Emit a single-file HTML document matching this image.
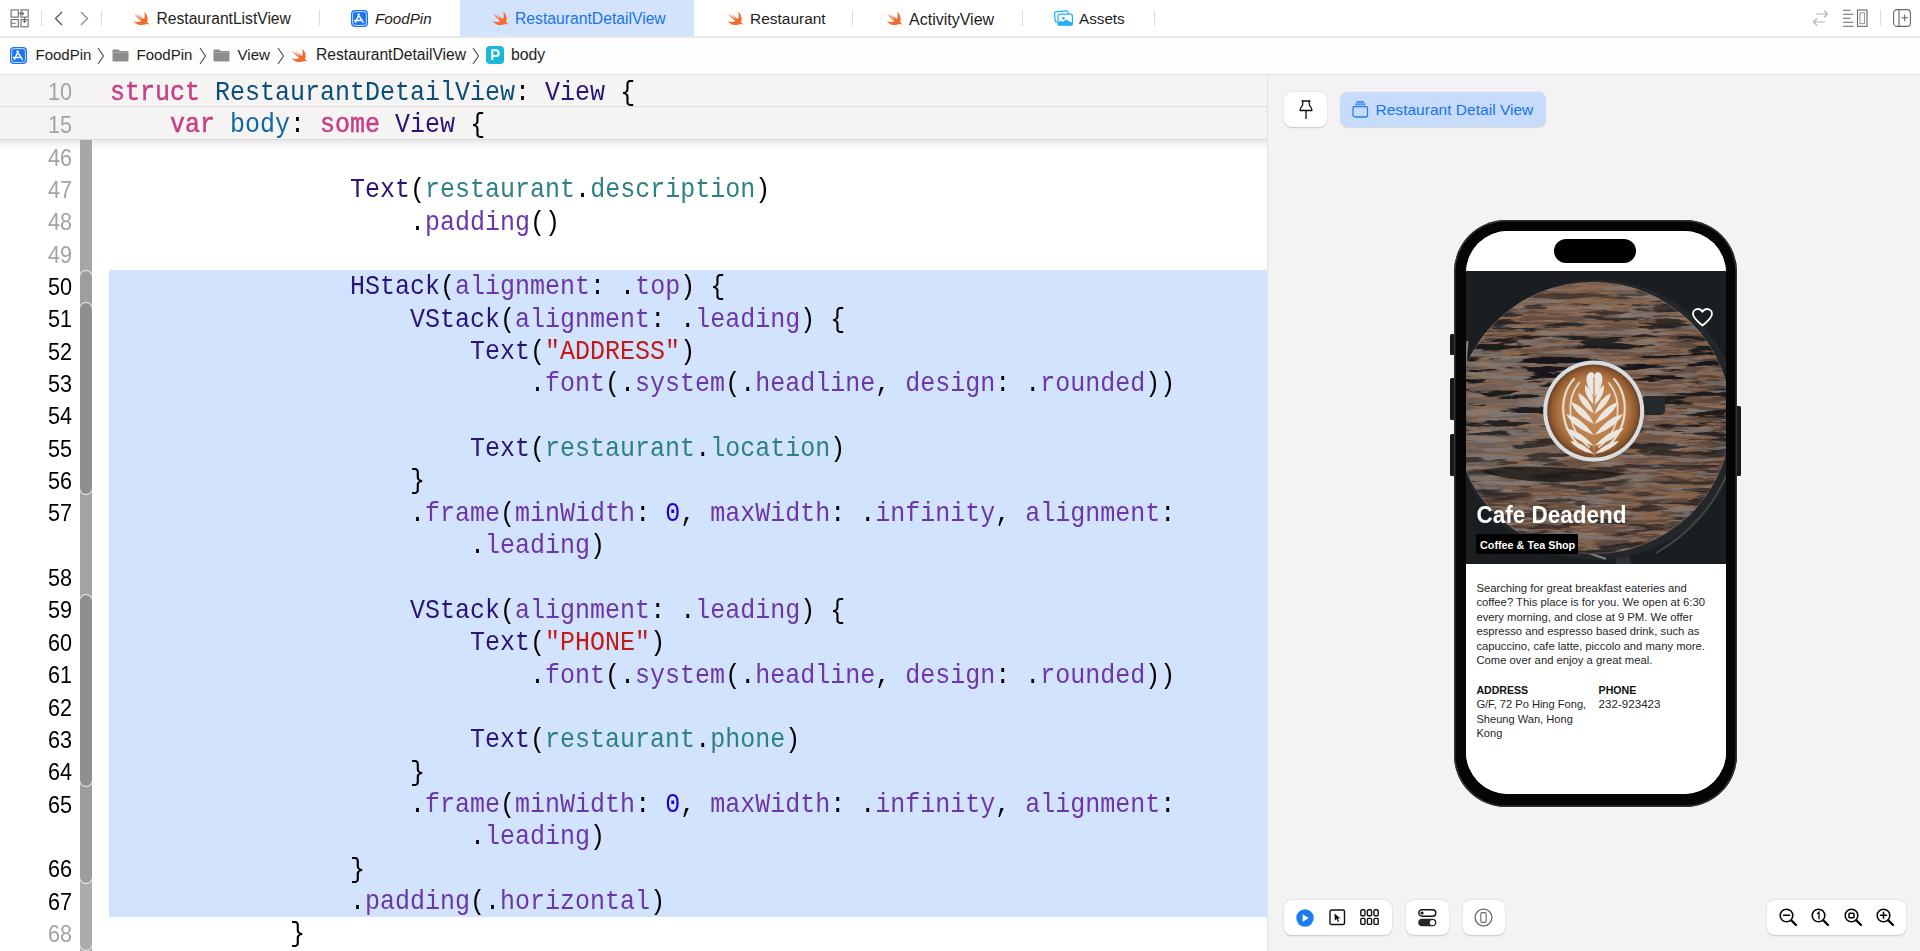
<!DOCTYPE html>
<html><head><meta charset="utf-8"><style>
*{margin:0;padding:0;box-sizing:border-box}
html,body{width:1920px;height:951px;overflow:hidden;background:#fff;font-family:"Liberation Sans",sans-serif}
.a{position:absolute}
svg{position:absolute;overflow:visible}
#tabs{left:0;top:0;width:1920px;height:38px;background:#fff;border-bottom:2px solid #e7e7e7}
.tt{position:absolute;font-size:15.6px;color:#1d1d1d;white-space:nowrap;line-height:20px}
.sep{position:absolute;top:10px;width:1px;height:16px;background:#dcdcdc}
#crumb{left:0;top:38px;width:1920px;height:37px;background:#fdfdfd;border-bottom:1px solid #e2e2e2}
.ct{position:absolute;font-size:15px;color:#1d1d1d;white-space:nowrap;line-height:20px}
#editor{left:0;top:75px;width:1267px;height:876px;background:#fff;overflow:hidden}
.ln{position:absolute;left:0;width:72px;text-align:right;font-size:23.5px;color:#a3a3a3;line-height:20px;white-space:nowrap;transform:scaleX(0.92);transform-origin:72px 0}
.ln.s{color:#000}
.cl{position:absolute;left:110px;font-family:"Liberation Mono",monospace;font-size:25px;line-height:30px;white-space:pre;color:#000;transform:scaleY(1.07);transform-origin:0 21.65px}
.k{color:#c63f84;-webkit-text-stroke:0.45px #c63f84}
.td{color:#0b4f79}
.ty{color:#2b1477}
.od{color:#0f68a0}
.pv{color:#2e8082}
.fn{color:#6c36a9}
.st{color:#c41a16}
.nu{color:#1c00cf}
#preview{left:1267px;top:75px;width:653px;height:876px;background:#f3f3f3;border-left:1px solid #e2e2e2;overflow:hidden}
</style></head><body>
<div id="editor" class="a"><div class="a" style="left:0;top:0;width:1267px;height:31px;background:#f5f4f3"></div><div class="a" style="left:0;top:31px;width:1267px;height:1px;background:#dcdcdc"></div><div class="a" style="left:0;top:32px;width:1267px;height:32px;background:#f5f4f3"></div><div class="a" style="left:0;top:64px;width:1267px;height:1px;background:#d9d9d9"></div><div class="a" style="left:0;top:65px;width:1267px;height:9px;background:linear-gradient(#e9e9e9,rgba(255,255,255,0))"></div><div class="a" style="left:109px;top:195px;width:1158px;height:647px;background:#d2e3fe"></div><div class="a" style="left:80px;top:65.0px;width:12px;height:820.0px;background:#a7a7a7;border-radius:0 0 0 0"></div><div class="a" style="left:80px;top:196.0px;width:12px;height:39.0px;background:#9d9f9f;border-radius:6px 6px 0 0;box-shadow:0 0 0 0.9px rgba(255,255,255,0.8)"></div><div class="a" style="left:80px;top:411.0px;width:12px;height:118.0px;background:#a2a3a3;border-radius:0 0 0 0"></div><div class="a" style="left:80px;top:800.0px;width:12px;height:74.5px;background:#ababab;border-radius:0 0 6px 6px;box-shadow:0 0 0 0.9px rgba(255,255,255,0.8)"></div><div class="a" style="left:80px;top:703.0px;width:12px;height:104.5px;background:#9d9d9d;border-radius:0 0 6px 6px;box-shadow:0 0 0 0.9px rgba(255,255,255,0.8)"></div><div class="a" style="left:80px;top:228.0px;width:12px;height:191.0px;background:#8f8f8f;border-radius:6px 6px 6px 6px;box-shadow:0 0 0 0.9px rgba(255,255,255,0.8)"></div><div class="a" style="left:80px;top:520.0px;width:12px;height:191.0px;background:#8f8f8f;border-radius:6px 6px 6px 6px;box-shadow:0 0 0 0.9px rgba(255,255,255,0.8)"></div><div class="ln" style="top:72.55px">46</div><div class="ln" style="top:104.90px">47</div><div class="cl" style="top:101.25px">                <span class="ty">Text</span>(<span class="pv">restaurant</span>.<span class="pv">description</span>)</div><div class="ln" style="top:137.25px">48</div><div class="cl" style="top:133.60px">                    .<span class="fn">padding</span>()</div><div class="ln" style="top:169.60px">49</div><div class="ln s" style="top:201.95px">50</div><div class="cl" style="top:198.30px">                <span class="ty">HStack</span>(<span class="fn">alignment</span>: .<span class="fn">top</span>) {</div><div class="ln s" style="top:234.30px">51</div><div class="cl" style="top:230.65px">                    <span class="ty">VStack</span>(<span class="fn">alignment</span>: .<span class="fn">leading</span>) {</div><div class="ln s" style="top:266.65px">52</div><div class="cl" style="top:263.00px">                        <span class="ty">Text</span>(<span class="st">"ADDRESS"</span>)</div><div class="ln s" style="top:299.00px">53</div><div class="cl" style="top:295.35px">                            .<span class="fn">font</span>(.<span class="fn">system</span>(.<span class="fn">headline</span>, <span class="fn">design</span>: .<span class="fn">rounded</span>))</div><div class="ln s" style="top:331.35px">54</div><div class="ln s" style="top:363.70px">55</div><div class="cl" style="top:360.05px">                        <span class="ty">Text</span>(<span class="pv">restaurant</span>.<span class="pv">location</span>)</div><div class="ln s" style="top:396.05px">56</div><div class="cl" style="top:392.40px">                    }</div><div class="ln s" style="top:428.40px">57</div><div class="cl" style="top:424.75px">                    .<span class="fn">frame</span>(<span class="fn">minWidth</span>: <span class="nu">0</span>, <span class="fn">maxWidth</span>: .<span class="fn">infinity</span>, <span class="fn">alignment</span>:</div><div class="cl" style="top:457.10px">                        .<span class="fn">leading</span>)</div><div class="ln s" style="top:493.10px">58</div><div class="ln s" style="top:525.45px">59</div><div class="cl" style="top:521.80px">                    <span class="ty">VStack</span>(<span class="fn">alignment</span>: .<span class="fn">leading</span>) {</div><div class="ln s" style="top:557.80px">60</div><div class="cl" style="top:554.15px">                        <span class="ty">Text</span>(<span class="st">"PHONE"</span>)</div><div class="ln s" style="top:590.15px">61</div><div class="cl" style="top:586.50px">                            .<span class="fn">font</span>(.<span class="fn">system</span>(.<span class="fn">headline</span>, <span class="fn">design</span>: .<span class="fn">rounded</span>))</div><div class="ln s" style="top:622.50px">62</div><div class="ln s" style="top:654.85px">63</div><div class="cl" style="top:651.20px">                        <span class="ty">Text</span>(<span class="pv">restaurant</span>.<span class="pv">phone</span>)</div><div class="ln s" style="top:687.20px">64</div><div class="cl" style="top:683.55px">                    }</div><div class="ln s" style="top:719.55px">65</div><div class="cl" style="top:715.90px">                    .<span class="fn">frame</span>(<span class="fn">minWidth</span>: <span class="nu">0</span>, <span class="fn">maxWidth</span>: .<span class="fn">infinity</span>, <span class="fn">alignment</span>:</div><div class="cl" style="top:748.25px">                        .<span class="fn">leading</span>)</div><div class="ln s" style="top:784.25px">66</div><div class="cl" style="top:780.60px">                }</div><div class="ln s" style="top:816.60px">67</div><div class="cl" style="top:812.95px">                .<span class="fn">padding</span>(.<span class="fn">horizontal</span>)</div><div class="ln" style="top:848.95px">68</div><div class="cl" style="top:845.30px">            }</div><div class="ln" style="top:7.30px">10</div><div class="cl" style="top:3.65px"><span class="k">struct</span> <span class="td">RestaurantDetailView</span>: <span class="ty">View</span> {</div><div class="ln" style="top:39.90px">15</div><div class="cl" style="top:36.25px">    <span class="k">var</span> <span class="od">body</span>: <span class="k">some</span> <span class="ty">View</span> {</div></div>
<div id="tabs" class="a"><div class="a" style="left:460px;top:0;width:234px;height:36px;background:#d3e3fb"></div><svg style="left:10px;top:9px" width="19" height="19" viewBox="0 0 19 19"><g fill="none" stroke="#6b6b6b" stroke-width="1.1"><rect x="1.1" y="0.9" width="7.2" height="7.2"/><rect x="11" y="0.9" width="7.2" height="7.2"/><rect x="1.1" y="10.6" width="7.2" height="7.2"/><rect x="11" y="10.6" width="7.2" height="7.2"/><path d="M8.3 4.5H13.5M12 3L13.5 4.5L12 6M14.6 8.1V13.3M13.1 11.8L14.6 13.3L16.1 11.8M1.1 14.2H5.5"/></g></svg><div class="sep" style="left:41px"></div><svg style="left:54px;top:11px" width="9" height="15" viewBox="0 0 9 15"><path d="M8 1L1.5 7.5L8 14" stroke="#555" stroke-width="1.3" fill="none"/></svg><svg style="left:80px;top:11px" width="9" height="15" viewBox="0 0 9 15"><path d="M1 1L7.5 7.5L1 14" stroke="#8a8a8a" stroke-width="1.3" fill="none"/></svg><div class="sep" style="left:101px"></div><svg style="left:133.0px;top:11.0px" width="17.0" height="15.0" viewBox="0 0 17 15"><path fill="#f46a2c" d="M11 0.7C14.5 3 15.5 8 14 11.2C15 11.8 16 12.6 16.3 13.8C15.2 13 13.8 12.9 12.8 13.3C10.5 14.3 7 14.5 4.5 13.2C3 12.5 1.5 11.5 0.7 10.3C3 11.2 6 11.3 8.5 10C6 8.2 3 5.5 1 2.3C3.5 4.5 6.5 7 9 8.5C7.5 6.8 5.8 4.8 4.5 3C6.5 4.7 9 6.8 11 8C12 5.5 12 3 11 0.7Z"/></svg><div class="tt" style="left:156.5px;top:9.2px;font-size:15.64px">RestaurantListView</div><div class="sep" style="left:318.5px"></div><svg style="left:351.0px;top:9.5px" width="17" height="17" viewBox="0 0 17 17"><rect x="0" y="0" width="17" height="17" rx="4" fill="#1b74f5"/><rect x="1.6" y="1.6" width="13.8" height="13.8" rx="2.6" fill="#1b74f5" stroke="#d6e5fd" stroke-width="0.9"/><path d="M8.2 4.3L4.5 12.3M7 4.3L12.3 12.3M3.4 10.5H9.6" stroke="#fff" stroke-width="1.5" stroke-linecap="round" fill="none"/></svg><div class="tt" style="left:375px;top:9.2px;font-size:15.23px;font-style:italic">FoodPin</div><svg style="left:491.5px;top:11.0px" width="17.0" height="15.0" viewBox="0 0 17 15"><path fill="#f46a2c" d="M11 0.7C14.5 3 15.5 8 14 11.2C15 11.8 16 12.6 16.3 13.8C15.2 13 13.8 12.9 12.8 13.3C10.5 14.3 7 14.5 4.5 13.2C3 12.5 1.5 11.5 0.7 10.3C3 11.2 6 11.3 8.5 10C6 8.2 3 5.5 1 2.3C3.5 4.5 6.5 7 9 8.5C7.5 6.8 5.8 4.8 4.5 3C6.5 4.7 9 6.8 11 8C12 5.5 12 3 11 0.7Z"/></svg><div class="tt" style="left:515px;top:9.2px;font-size:15.71px;color:#1a73e8">RestaurantDetailView</div><svg style="left:726.5px;top:11.0px" width="17.0" height="15.0" viewBox="0 0 17 15"><path fill="#f46a2c" d="M11 0.7C14.5 3 15.5 8 14 11.2C15 11.8 16 12.6 16.3 13.8C15.2 13 13.8 12.9 12.8 13.3C10.5 14.3 7 14.5 4.5 13.2C3 12.5 1.5 11.5 0.7 10.3C3 11.2 6 11.3 8.5 10C6 8.2 3 5.5 1 2.3C3.5 4.5 6.5 7 9 8.5C7.5 6.8 5.8 4.8 4.5 3C6.5 4.7 9 6.8 11 8C12 5.5 12 3 11 0.7Z"/></svg><div class="tt" style="left:750px;top:9.2px;font-size:15.48px">Restaurant</div><div class="sep" style="left:852px"></div><svg style="left:885.5px;top:11.0px" width="17.0" height="15.0" viewBox="0 0 17 15"><path fill="#f46a2c" d="M11 0.7C14.5 3 15.5 8 14 11.2C15 11.8 16 12.6 16.3 13.8C15.2 13 13.8 12.9 12.8 13.3C10.5 14.3 7 14.5 4.5 13.2C3 12.5 1.5 11.5 0.7 10.3C3 11.2 6 11.3 8.5 10C6 8.2 3 5.5 1 2.3C3.5 4.5 6.5 7 9 8.5C7.5 6.8 5.8 4.8 4.5 3C6.5 4.7 9 6.8 11 8C12 5.5 12 3 11 0.7Z"/></svg><div class="tt" style="left:909px;top:9.2px;font-size:16.03px">ActivityView</div><div class="sep" style="left:1022px"></div><svg style="left:1053px;top:10px" width="21" height="17" viewBox="0 0 21 17"><g fill="none" stroke="#1fb0f7" stroke-width="1.25" stroke-linejoin="round"><path d="M4.8 12.1H3.6Q2.4 12 2.2 10.8L1.5 3.4Q1.4 2.1 2.7 1.9L13.3 0.8Q14.6 0.7 14.8 2L14.9 3.9"/><rect x="5" y="4.1" width="14.4" height="11.1" rx="2"/></g><circle cx="10.4" cy="8.3" r="1.25" fill="#1fb0f7"/><path d="M5.3 15.2V12.6L7.8 10.6L9.8 12L13.2 9.2L16.2 11.6L19.4 12.6V15.2Z" fill="#1fb0f7"/></svg><div class="tt" style="left:1079px;top:9.2px;font-size:15.24px">Assets</div><div class="sep" style="left:1153.5px"></div><svg style="left:1812px;top:9px" width="17" height="18" viewBox="0 0 17 18"><g fill="none" stroke="#b3b3b3" stroke-width="1.2"><path d="M4 5H15.5M12 1.5L15.5 5L12 8.5M13 13H1.5M5 9.5L1.5 13L5 16.5"/></g></svg><svg style="left:1843px;top:9px" width="25" height="18" viewBox="0 0 25 18"><g fill="none" stroke="#656565" stroke-width="1.1"><path d="M0 1.2H7.5M0 5.2H10.5M0 9.2H7.5M0 13.2H10.5M0 17.2H10.5"/><rect x="14.5" y="1" width="9.5" height="16.3"/></g><rect x="17" y="3.8" width="4.5" height="10.8" fill="none" stroke="#9a9a9a" stroke-width="1.1"/></svg><div class="sep" style="left:1880px"></div><svg style="left:1893px;top:9px" width="18" height="18" viewBox="0 0 18 18"><g fill="none" stroke="#656565" stroke-width="1.1"><rect x="0.6" y="0.6" width="16.8" height="16.8" rx="3.5"/><path d="M6 0.6V17.4M11.7 5.5V12.2M8.3 8.8H15"/></g></svg></div>
<div id="crumb" class="a"><svg style="left:10.0px;top:9.0px" width="17" height="17" viewBox="0 0 17 17"><rect x="0" y="0" width="17" height="17" rx="4" fill="#1b74f5"/><rect x="1.6" y="1.6" width="13.8" height="13.8" rx="2.6" fill="#1b74f5" stroke="#d6e5fd" stroke-width="0.9"/><path d="M8.2 4.3L4.5 12.3M7 4.3L12.3 12.3M3.4 10.5H9.6" stroke="#fff" stroke-width="1.5" stroke-linecap="round" fill="none"/></svg><div class="ct" style="left:35.5px;top:7.2px;font-size:15.03px">FoodPin</div><svg style="left:97.0px;top:8.5px" width="8" height="18" viewBox="0 0 8 18"><path d="M1 1L6.5 9L1 17" stroke="#4a4a4a" stroke-width="1.1" fill="none"/></svg><svg style="left:111.5px;top:11.0px" width="17" height="13" viewBox="0 0 17 13"><path d="M1.5 0.5H6.5L8 2H15.5A1 1 0 0 1 16.5 3V11.5A1 1 0 0 1 15.5 12.5H1.5A1 1 0 0 1 0.5 11.5V1.5A1 1 0 0 1 1.5 0.5Z" fill="#8d8d8d"/><path d="M0.5 3.5H16.5" stroke="#a9a9a9" stroke-width="0.8"/></svg><div class="ct" style="left:136.5px;top:7.2px;font-size:15.03px">FoodPin</div><svg style="left:198.5px;top:8.5px" width="8" height="18" viewBox="0 0 8 18"><path d="M1 1L6.5 9L1 17" stroke="#4a4a4a" stroke-width="1.1" fill="none"/></svg><svg style="left:212.5px;top:11.0px" width="17" height="13" viewBox="0 0 17 13"><path d="M1.5 0.5H6.5L8 2H15.5A1 1 0 0 1 16.5 3V11.5A1 1 0 0 1 15.5 12.5H1.5A1 1 0 0 1 0.5 11.5V1.5A1 1 0 0 1 1.5 0.5Z" fill="#8d8d8d"/><path d="M0.5 3.5H16.5" stroke="#a9a9a9" stroke-width="0.8"/></svg><div class="ct" style="left:237.5px;top:7.2px;font-size:15.1px">View</div><svg style="left:277.0px;top:8.5px" width="8" height="18" viewBox="0 0 8 18"><path d="M1 1L6.5 9L1 17" stroke="#4a4a4a" stroke-width="1.1" fill="none"/></svg><svg style="left:291.0px;top:10.0px" width="17.0" height="15.0" viewBox="0 0 17 15"><path fill="#f46a2c" d="M11 0.7C14.5 3 15.5 8 14 11.2C15 11.8 16 12.6 16.3 13.8C15.2 13 13.8 12.9 12.8 13.3C10.5 14.3 7 14.5 4.5 13.2C3 12.5 1.5 11.5 0.7 10.3C3 11.2 6 11.3 8.5 10C6 8.2 3 5.5 1 2.3C3.5 4.5 6.5 7 9 8.5C7.5 6.8 5.8 4.8 4.5 3C6.5 4.7 9 6.8 11 8C12 5.5 12 3 11 0.7Z"/></svg><div class="ct" style="left:316px;top:7.2px;font-size:15.63px">RestaurantDetailView</div><svg style="left:471.5px;top:8.5px" width="8" height="18" viewBox="0 0 8 18"><path d="M1 1L6.5 9L1 17" stroke="#4a4a4a" stroke-width="1.1" fill="none"/></svg><svg style="left:486px;top:8.0px" width="18" height="18" viewBox="0 0 18 18"><rect width="18" height="18" rx="4" fill="#18b8d8"/><path d="M6.3 14V4.3H9.8A2.9 2.9 0 0 1 9.8 10.1H6.3" fill="none" stroke="#fff" stroke-width="2"/></svg><div class="ct" style="left:511px;top:7.2px;font-size:15.8px">body</div></div>
<div id="preview" class="a"><div class="a" style="left:16.0px;top:17.0px;width:43px;height:35px;background:#fff;border-radius:8px;box-shadow:0 0.5px 1.5px rgba(0,0,0,0.18)"></div><svg style="left:30.5px;top:24.5px" width="14" height="20" viewBox="0 0 14 20"><g fill="none" stroke="#111" stroke-width="1.3" stroke-linejoin="round"><path d="M2.5 1H11.5M4 1L3.5 5.5C1.5 7 1 8.5 1 10.5H13C13 8.5 12.5 7 10.5 5.5L10 1M7 10.5V19"/></g></svg><div class="a" style="left:72.0px;top:17.0px;width:206px;height:35px;background:#c7dcfb;border-radius:8px;box-shadow:0 0.5px 1.5px rgba(0,0,0,0.12)"></div><svg style="left:83.5px;top:26.0px" width="17" height="17" viewBox="0 0 17 17"><g fill="none" stroke="#2a7cf0" stroke-width="1.3"><rect x="1" y="5.5" width="14.5" height="10.5" rx="2"/><path d="M3 3.2H13.5M4.5 1H12"/></g></svg><div class="a" style="left:107.5px;top:24.5px;font-size:15.56px;line-height:20px;color:#1a72ea;white-space:nowrap">Restaurant Detail View</div><div class="a" style="left:181.5px;top:258.5px;width:5px;height:21.5px;background:#1a1a1a;border-radius:1.5px"></div><div class="a" style="left:181.5px;top:303.0px;width:5px;height:42.0px;background:#1a1a1a;border-radius:1.5px"></div><div class="a" style="left:181.5px;top:358.5px;width:5px;height:42.0px;background:#1a1a1a;border-radius:1.5px"></div><div class="a" style="left:468.0px;top:331.0px;width:5px;height:69.5px;background:#1a1a1a;border-radius:1.5px"></div><div class="a" style="left:186.0px;top:145.0px;width:283px;height:587px;background:#050505;border-radius:52px;box-shadow:inset 0 0 0 1.5px #353535"></div><div class="a" style="left:198.0px;top:155.5px;width:260px;height:563.5px;border-radius:42px;overflow:hidden;background:#fff"><div class="a" style="left:0;top:0;width:260px;height:563.5px;background:#fff"></div><div class="a" style="left:0;top:40.5px;width:260px;height:293.0px;overflow:hidden;background:#1b1e21"><svg style="left:0;top:0" width="260" height="293" viewBox="0 0 260 293">
<defs>
<filter id="wdark" x="0" y="0" width="100%" height="100%" color-interpolation-filters="sRGB">
<feTurbulence type="fractalNoise" baseFrequency="0.018 0.14" numOctaves="5" seed="5" result="n"/>
<feColorMatrix type="matrix" values="0 0 0 0 0.09  0 0 0 0 0.09  0 0 0 0 0.10  0 0 0 12 -6.5" in="n"/>
</filter>
<filter id="wgray" x="0" y="0" width="100%" height="100%" color-interpolation-filters="sRGB">
<feTurbulence type="fractalNoise" baseFrequency="0.02 0.2" numOctaves="4" seed="17" result="n"/>
<feColorMatrix type="matrix" values="0 0 0 0 0.54  0 0 0 0 0.52  0 0 0 0 0.52  0 0 0 10 -5.1" in="n"/>
</filter>
<filter id="worange" x="0" y="0" width="100%" height="100%" color-interpolation-filters="sRGB">
<feTurbulence type="fractalNoise" baseFrequency="0.03 0.28" numOctaves="4" seed="29" result="n"/>
<feColorMatrix type="matrix" values="0 0 0 0 0.56  0 0 0 0 0.41  0 0 0 0 0.31  0 0 0 8 -3.8" in="n"/>
</filter>
<linearGradient id="band" x1="0" y1="0" x2="0" y2="1">
<stop offset="0" stop-color="#fff" stop-opacity="0.35"/><stop offset="0.3" stop-color="#fff" stop-opacity="1"/><stop offset="0.5" stop-color="#fff" stop-opacity="0.9"/><stop offset="0.7" stop-color="#fff" stop-opacity="0.5"/><stop offset="1" stop-color="#fff" stop-opacity="0.7"/>
</linearGradient>
<mask id="bandm"><rect width="260" height="293" fill="url(#band)"/></mask>
<radialGradient id="tbase" cx="50%" cy="50%" r="50%">
<stop offset="0" stop-color="#72594a"/><stop offset="0.8" stop-color="#654f42"/><stop offset="1" stop-color="#4e4039"/>
</radialGradient>
<radialGradient id="latte" cx="50%" cy="50%" r="50%">
<stop offset="0" stop-color="#c68e5c"/><stop offset="0.7" stop-color="#b77c48"/><stop offset="0.9" stop-color="#925b30"/><stop offset="1" stop-color="#6a4226"/>
</radialGradient>
<filter id="soft" x="-2%" y="-2%" width="104%" height="104%"><feGaussianBlur stdDeviation="0.55"/></filter>
<clipPath id="tc"><ellipse cx="127" cy="147" rx="138" ry="136"/></clipPath>
<clipPath id="lc"><circle cx="127.7" cy="140.1" r="46.5"/></clipPath>
</defs>
<rect width="260" height="293" fill="#1b1e21"/>
<path d="M148 270L150 293H166L158 270Z" fill="#2e3236"/>
<ellipse cx="131" cy="149" rx="143" ry="140" fill="#23272a"/>
<path d="M1.5 70C-8 150 20 250 140 288" fill="none" stroke="#8a9095" stroke-width="2.2" opacity="0.85"/>
<path d="M190 282C225 262 250 232 262 200" fill="none" stroke="#4a4f53" stroke-width="2" opacity="0.8"/>
<g clip-path="url(#tc)"><g filter="url(#soft)">
<rect width="260" height="293" fill="url(#tbase)"/>
<ellipse cx="40" cy="150" rx="60" ry="70" fill="#7c7a78" opacity="0.45"/>
<ellipse cx="120" cy="22" rx="90" ry="22" fill="#9a7458" opacity="0.45"/>
<rect width="260" height="293" filter="url(#worange)" opacity="0.85"/>
<rect width="260" height="293" filter="url(#wgray)" opacity="0.55"/>
<g mask="url(#bandm)"><rect width="260" height="293" filter="url(#wdark)"/></g>
<path d="M14 200C40 192 110 196 160 203C120 214 50 214 14 200Z" fill="#161616" opacity="0.75"/>
</g><ellipse cx="127" cy="147" rx="138" ry="136" fill="none" stroke="#a08a78" stroke-width="2" opacity="0.35"/>
</g>
<rect x="176" y="125" width="23" height="19" rx="4.5" fill="#26292c"/>
<circle cx="127.7" cy="140.1" r="50.5" fill="#dadee1"/>
<circle cx="127.7" cy="140.1" r="46.5" fill="url(#latte)"/>
<g clip-path="url(#lc)"><g fill="none" stroke="#ece6e0" stroke-linecap="round" opacity="0.9"><path d="M108 108C92 125 92 160 120 180" stroke-width="2.2"/><path d="M148 108C164 125 164 160 136 180" stroke-width="2.2"/><path d="M113 112C100 128 100 158 123 176" stroke-width="1.8"/><path d="M143 112C156 128 156 158 133 176" stroke-width="1.8"/></g><g fill="#ece6e0"><path d="M128.5 126C120 116 118 104 124 101.5C127 100.5 128.5 103 128.5 105.5C128.5 103 130 100.5 133 101.5C139 104 137 116 128.5 126Z"/><path d="M128.0 134.0Q127.6 119.7 119.0 114.0Q117.6 124.3 128.0 134.0Z"/><path d="M128.5 134.0Q139.2 124.4 138.0 114.0Q129.2 119.6 128.5 134.0Z"/><path d="M128.0 143.0Q123.2 126.8 112.0 122.0Q113.6 134.0 128.0 143.0Z"/><path d="M128.5 143.0Q143.1 134.1 145.0 122.0Q133.7 126.7 128.5 143.0Z"/><path d="M128.0 153.0Q118.7 135.1 105.0 131.0Q109.7 144.5 128.0 153.0Z"/><path d="M128.5 153.0Q147.0 144.5 152.0 131.0Q138.2 135.1 128.5 153.0Z"/><path d="M128.0 164.0Q115.1 146.2 100.0 143.0Q107.3 156.6 128.0 164.0Z"/><path d="M128.5 164.0Q149.5 156.6 157.0 143.0Q141.7 146.2 128.5 164.0Z"/><path d="M128.0 175.0Q113.8 159.1 99.0 157.0Q107.4 169.3 128.0 175.0Z"/><path d="M128.5 175.0Q149.3 169.3 158.0 157.0Q143.1 159.1 128.5 175.0Z"/><path d="M128.0 183.0Q116.0 170.8 104.0 170.0Q111.2 179.6 128.0 183.0Z"/><path d="M128.5 183.0Q145.5 179.6 153.0 170.0Q140.9 170.8 128.5 183.0Z"/></g></g><path d="M128 106V186" stroke="#c08a58" stroke-width="1.2"/></svg><svg style="left:226.3px;top:37.0px" width="21" height="19" viewBox="0 0 21 19"><path d="M10.5 17.5C4 12.5 1 9.5 1 5.8C1 3 3.2 1 5.8 1C7.8 1 9.5 2.2 10.5 3.8C11.5 2.2 13.2 1 15.2 1C17.8 1 20 3 20 5.8C20 9.5 17 12.5 10.5 17.5Z" fill="none" stroke="#fff" stroke-width="1.8" stroke-linejoin="round"/></svg><div class="a" style="left:10.5px;top:231.7px;font-size:22.5px;font-weight:bold;color:#fff;line-height:26px;white-space:nowrap;transform:scaleY(1.1);transform-origin:0 20.3px">Cafe Deadend</div><div class="a" style="left:10.3px;top:263.0px;width:102px;height:20px;background:#000"></div><div class="a" style="left:14.0px;top:267.0px;font-size:10.8px;font-weight:bold;color:#fff;line-height:14px;white-space:nowrap">Coffee &amp; Tea Shop</div></div><div class="a" style="left:88.0px;top:8.5px;width:82px;height:24px;background:#000;border-radius:12px"></div><div class="a" style="left:10.4px;top:350.30px;font-size:11.27px;line-height:14px;color:#1f1f1f;white-space:nowrap">Searching for great breakfast eateries and</div><div class="a" style="left:10.4px;top:364.80px;font-size:11.27px;line-height:14px;color:#1f1f1f;white-space:nowrap">coffee? This place is for you. We open at 6:30</div><div class="a" style="left:10.4px;top:379.30px;font-size:11.27px;line-height:14px;color:#1f1f1f;white-space:nowrap">every morning, and close at 9 PM. We offer</div><div class="a" style="left:10.4px;top:393.80px;font-size:11.27px;line-height:14px;color:#1f1f1f;white-space:nowrap">espresso and espresso based drink, such as</div><div class="a" style="left:10.4px;top:408.30px;font-size:11.27px;line-height:14px;color:#1f1f1f;white-space:nowrap">capuccino, cafe latte, piccolo and many more.</div><div class="a" style="left:10.4px;top:422.80px;font-size:11.27px;line-height:14px;color:#1f1f1f;white-space:nowrap">Come over and enjoy a great meal.</div><div class="a" style="left:10.4px;top:452.20px;font-size:10.6px;font-weight:bold;line-height:14px;color:#111;white-space:nowrap">ADDRESS</div><div class="a" style="left:132.6px;top:452.20px;font-size:10.6px;font-weight:bold;line-height:14px;color:#111;white-space:nowrap">PHONE</div><div class="a" style="left:10.4px;top:466.50px;font-size:11.1px;line-height:14px;color:#1f1f1f;white-space:nowrap">G/F, 72 Po Hing Fong,</div><div class="a" style="left:10.4px;top:481.00px;font-size:11.1px;line-height:14px;color:#1f1f1f;white-space:nowrap">Sheung Wan, Hong</div><div class="a" style="left:10.4px;top:495.50px;font-size:11.1px;line-height:14px;color:#1f1f1f;white-space:nowrap">Kong</div><div class="a" style="left:132.6px;top:466.50px;font-size:11.6px;line-height:14px;color:#1f1f1f;white-space:nowrap">232-923423</div></div><div class="a" style="left:16.2px;top:824.6px;width:107.8px;height:35.2px;background:#fff;border-radius:8px;box-shadow:0 0.5px 2px rgba(0,0,0,0.2)"></div><div class="a" style="left:138.0px;top:824.6px;width:43.0px;height:35.2px;background:#fff;border-radius:8px;box-shadow:0 0.5px 2px rgba(0,0,0,0.2)"></div><div class="a" style="left:195.0px;top:824.6px;width:42.0px;height:35.2px;background:#fff;border-radius:8px;box-shadow:0 0.5px 2px rgba(0,0,0,0.2)"></div><div class="a" style="left:498.5px;top:824.6px;width:139.9px;height:35.2px;background:#fff;border-radius:8px;box-shadow:0 0.5px 2px rgba(0,0,0,0.2)"></div><svg style="left:28.2px;top:833.6px" width="18" height="18" viewBox="0 0 18 18"><circle cx="9" cy="9" r="8.7" fill="#1a7bf2"/><path d="M6.6 5.2L12.8 9L6.6 12.8Z" fill="#fff"/></svg><svg style="left:60.5px;top:834.0px" width="17" height="17" viewBox="0 0 17 17"><rect x="1" y="1" width="14.5" height="14.5" rx="1.5" fill="none" stroke="#111" stroke-width="1.4"/><path d="M5.5 4.5L11.3 9.2L8.8 9.4L10.2 12.4L9 13L7.6 10L5.8 11.8Z" fill="#111"/></svg><svg style="left:91.5px;top:834.0px" width="19" height="17" viewBox="0 0 19 17"><g fill="none" stroke="#111" stroke-width="1.4"><rect x="0.8" y="0.8" width="4.2" height="6" rx="1.2"/><rect x="0.8" y="9.4" width="4.2" height="6" rx="1.2"/><rect x="7.4" y="0.8" width="4.2" height="6" rx="1.2"/><rect x="7.4" y="9.4" width="4.2" height="6" rx="1.2"/><rect x="14.0" y="0.8" width="4.2" height="6" rx="1.2"/><rect x="14.0" y="9.4" width="4.2" height="6" rx="1.2"/></g></svg><svg style="left:150.0px;top:834.0px" width="19" height="18" viewBox="0 0 19 18"><rect x="0.8" y="0.8" width="17" height="6.4" rx="3.2" fill="none" stroke="#111" stroke-width="1.4"/><circle cx="4" cy="4" r="1.6" fill="#111"/><rect x="0.3" y="9.8" width="18" height="7.4" rx="3.7" fill="#262626"/><circle cx="14.4" cy="13.5" r="2.6" fill="#fff"/></svg><svg style="left:206.2px;top:833.1px" width="19" height="19" viewBox="0 0 19 19"><circle cx="9.5" cy="9.5" r="8.4" fill="none" stroke="#6a6a6a" stroke-width="1.3"/><rect x="6.8" y="4.6" width="5.4" height="9.8" rx="1.2" fill="none" stroke="#6a6a6a" stroke-width="1.1"/></svg><svg style="left:510.7px;top:833.3px" width="20" height="20" viewBox="0 0 20 20"><g fill="none" stroke="#000" stroke-width="1.6" stroke-linecap="round"><circle cx="7.5" cy="7.5" r="6.3"/><path d="M12.2 12.2L17 17" stroke-width="2.3"/><path d="M4.5 7.3H10.5"/></g></svg><svg style="left:543.1px;top:833.3px" width="20" height="20" viewBox="0 0 20 20"><g fill="none" stroke="#000" stroke-width="1.6" stroke-linecap="round"><circle cx="7.5" cy="7.5" r="6.3"/><path d="M12.2 12.2L17 17" stroke-width="2.3"/><path d="M6.5 5.5L8 4.2V10.8" stroke-width="1.3"/></g></svg><svg style="left:575.5px;top:833.3px" width="20" height="20" viewBox="0 0 20 20"><g fill="none" stroke="#000" stroke-width="1.6" stroke-linecap="round"><circle cx="7.5" cy="7.5" r="6.3"/><path d="M12.2 12.2L17 17" stroke-width="2.3"/><rect x="5" y="5.2" width="5" height="4.6" rx="0.8" stroke-width="1.5"/></g></svg><svg style="left:607.9px;top:833.3px" width="20" height="20" viewBox="0 0 20 20"><g fill="none" stroke="#000" stroke-width="1.6" stroke-linecap="round"><circle cx="7.5" cy="7.5" r="6.3"/><path d="M12.2 12.2L17 17" stroke-width="2.3"/><path d="M4.5 7.3H10.5M7.5 4.3V10.3"/></g></svg></div>
</body></html>
